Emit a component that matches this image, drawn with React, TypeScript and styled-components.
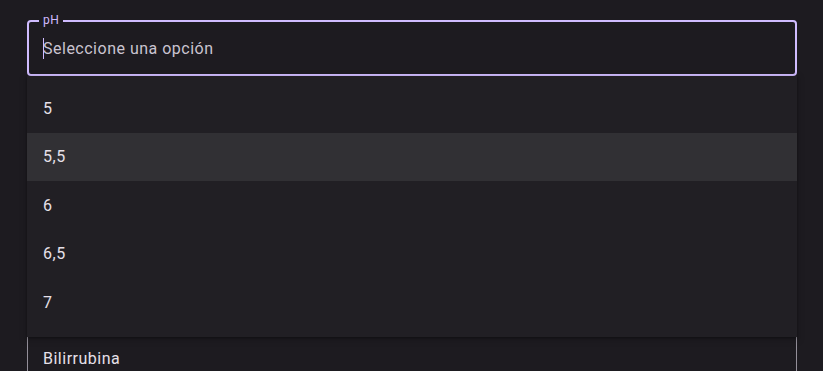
import React from "react";
import styled, { createGlobalStyle } from "styled-components";

const Global = createGlobalStyle`
  html, body { margin: 0; padding: 0; background: #1d1b20; }
  body { font-family: Roboto, "Noto Sans", sans-serif; -webkit-font-smoothing: antialiased; }
`;

const Page = styled.div`
  width: 823px;
  height: 371px;
  overflow: hidden;
  box-sizing: border-box;
  padding: 20px 26px 0 27px;
  background: #1d1b20;
`;

const Form = styled.div`
  display: flex;
  flex-direction: column;
  gap: 21.5px;
`;

const FieldWrap = styled.div`
  position: relative;
`;

const Field = styled.div<{ $focused?: boolean }>`
  position: relative;
  box-sizing: border-box;
  height: 56px;
  border-radius: 4px;
  border: ${(p) => (p.$focused ? "2px solid #d0bcff" : "1px solid #938f99")};
  padding-left: ${(p) => (p.$focused ? "14px" : "15px")};
  display: flex;
  align-items: center;
  font-size: 16px;
  letter-spacing: 0.5px;
  color: #e6e0e9;
`;

const Label = styled.span`
  position: absolute;
  top: -10px;
  left: 10px;
  padding: 0 4px;
  background: #1d1b20;
  color: #d0bcff;
  font-size: 12px;
  line-height: 16px;
  letter-spacing: 0.4px;
`;

const Placeholder = styled.span`
  position: relative;
  color: #cac4d0;
`;

const Caret = styled.span`
  position: absolute;
  left: 0;
  top: -1px;
  bottom: -1px;
  width: 1px;
  background: #d0bcff;
`;

const Menu = styled.ul`
  position: absolute;
  z-index: 2;
  top: 56px;
  left: 0;
  right: 0;
  margin: 0;
  padding: 8px 0 10px;
  list-style: none;
  background: #211f24;
  box-shadow: 0 1px 2px rgba(0, 0, 0, 0.3), 0 2px 6px 2px rgba(0, 0, 0, 0.15);
`;

const Item = styled.li<{ $active?: boolean }>`
  height: 48.5px;
  display: flex;
  align-items: center;
  padding-left: 16px;
  font-size: 16px;
  letter-spacing: 0.5px;
  color: #e6e0e9;
  background: ${(p) => (p.$active ? "#313034" : "transparent")};
`;

const options = ["5", "5,5", "6", "6,5", "7"];

export default function App() {
  return (
    <Page>
      <Global />
      <Form>
        <FieldWrap>
          <Field $focused>
            <Label>pH</Label>
            <Placeholder>
              <Caret />
              Seleccione una opción
            </Placeholder>
          </Field>
          <Menu>
            {options.map((o) => (
              <Item key={o} $active={o === "5,5"}>
                {o}
              </Item>
            ))}
          </Menu>
        </FieldWrap>
        <Field />
        <Field />
        <Field />
        <Field>Bilirrubina</Field>
      </Form>
    </Page>
  );
}
